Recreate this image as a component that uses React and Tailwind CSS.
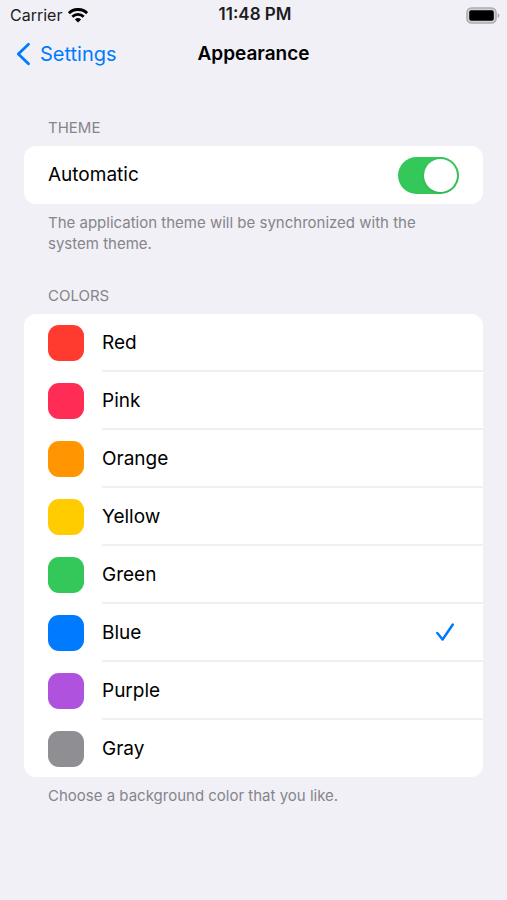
import React from "react";

const COLORS = [
  { name: "Red", swatch: "bg-[#ff3b30]" },
  { name: "Pink", swatch: "bg-[#ff2d55]" },
  { name: "Orange", swatch: "bg-[#ff9500]" },
  { name: "Yellow", swatch: "bg-[#ffcc00]" },
  { name: "Green", swatch: "bg-[#34c759]" },
  { name: "Blue", swatch: "bg-[#007aff]" },
  { name: "Purple", swatch: "bg-[#af52de]" },
  { name: "Gray", swatch: "bg-[#8e8e93]" },
];

function WifiIcon() {
  return (
    <svg viewBox="0 0 20 15" className="h-[15px] w-5" fill="none" stroke="#000" aria-hidden="true">
      <path d="M0.9 5.2a13 13 0 0 1 18.2 0" strokeWidth="3" />
      <path d="M4.3 8.7a8.2 8.2 0 0 1 11.4 0" strokeWidth="2.8" />
      <path d="M10 14.6 6.9 11.5a4.5 4.5 0 0 1 6.2 0Z" fill="#000" stroke="none" />
    </svg>
  );
}

function BatteryIcon() {
  return (
    <svg viewBox="0 0 34 17" className="h-[17px] w-[34px]" aria-hidden="true">
      <rect x="1" y="1" width="29" height="15" rx="4.5" fill="#d4d4d8" stroke="#adadb1" strokeWidth="1.6" />
      <rect x="3.2" y="3.2" width="24.6" height="10.6" rx="2" fill="#000" />
      <path d="M31.6 6.2c1.3.4 1.9 1.3 1.9 2.3s-.6 1.9-1.9 2.3Z" fill="#adadb1" />
    </svg>
  );
}

function StatusBar() {
  return (
    <div className="grid h-[30px] grid-cols-3 items-center pr-[7px] pl-[10px] text-base text-[#1c1c1e]">
      <div className="flex items-center gap-1.5">
        <span>Carrier</span>
        <WifiIcon />
      </div>
      <span className="text-center text-[17px] font-semibold">11:48 PM</span>
      <div className="flex justify-end">
        <BatteryIcon />
      </div>
    </div>
  );
}

function NavBar() {
  return (
    <header className="grid h-12 grid-cols-[1fr_auto_1fr] items-center px-4">
      <button type="button" className="flex items-center gap-2 justify-self-start text-xl text-[#007aff]">
        <svg viewBox="0 0 16 24" className="h-6 w-4" fill="none" stroke="currentColor" strokeWidth="2.8" strokeLinecap="round" strokeLinejoin="round" aria-hidden="true">
          <path d="M12.500 2.200 2.300 12l10.200 9.800" />
        </svg>
        Settings
      </button>
      <h1 className="text-[19px] font-semibold">Appearance</h1>
    </header>
  );
}

function Section({ title, footer, className, children }) {
  return (
    <section className={className}>
      <h2 className="px-6 pb-2 text-[15px] leading-5 text-[#85858b] uppercase">{title}</h2>
      <div className="overflow-hidden rounded-xl bg-white">{children}</div>
      <p className="px-6 pt-2 text-[15px] leading-[21px] text-[#85858b]">{footer}</p>
    </section>
  );
}

function ColorRow({ name, swatch }) {
  return (
    <label className="group flex h-[58px] items-center gap-[18px] pl-6 last:h-[57px]">
      <input
        type="radio"
        name="color"
        value={name}
        defaultChecked={name === "Blue"}
        className={`peer size-9 shrink-0 appearance-none rounded-[11px] ${swatch}`}
      />
      <span className="flex-1 self-stretch border-b-2 border-[#f0f0f2] leading-[58px] group-last:border-b-0">{name}</span>
      <span className="-ml-[18px] flex items-center self-stretch border-b-2 border-[#f0f0f2] pr-7 text-[#007aff] group-last:border-b-0 peer-checked:[&>svg]:visible">
        <svg viewBox="0 0 20 20" className="invisible size-5" fill="none" stroke="currentColor" strokeWidth="2.500" strokeLinecap="round" strokeLinejoin="round" aria-hidden="true">
          <path d="M2.300 11 7.600 17.500 17.800 2.500" />
        </svg>
      </span>
    </label>
  );
}

export default function App() {
  return (
    <div className="min-h-screen bg-[#f1f0f6] font-['Inter',sans-serif] text-black">
      <StatusBar />
      <NavBar />
      <main className="px-6 pt-10 pb-6">
        <Section title="Theme" footer="The application theme will be synchronized with the system theme.">
          <label className="flex h-[58px] items-center justify-between px-6 text-[19px]">
            Automatic
            <input
              type="checkbox"
              role="switch"
              defaultChecked
              className="flex h-[37px] w-[61px] appearance-none items-center rounded-full bg-[#e9e9ea] p-0.5 before:size-[33px] before:rounded-full before:bg-white before:shadow-sm checked:justify-end checked:bg-[#34c759]"
            />
          </label>
        </Section>
        <Section title="Colors" footer="Choose a background color that you like." className="pt-8">
          <div role="radiogroup" aria-label="Colors" className="text-[19px]">
            {COLORS.map((color) => (
              <ColorRow key={color.name} {...color} />
            ))}
          </div>
        </Section>
      </main>
    </div>
  );
}
